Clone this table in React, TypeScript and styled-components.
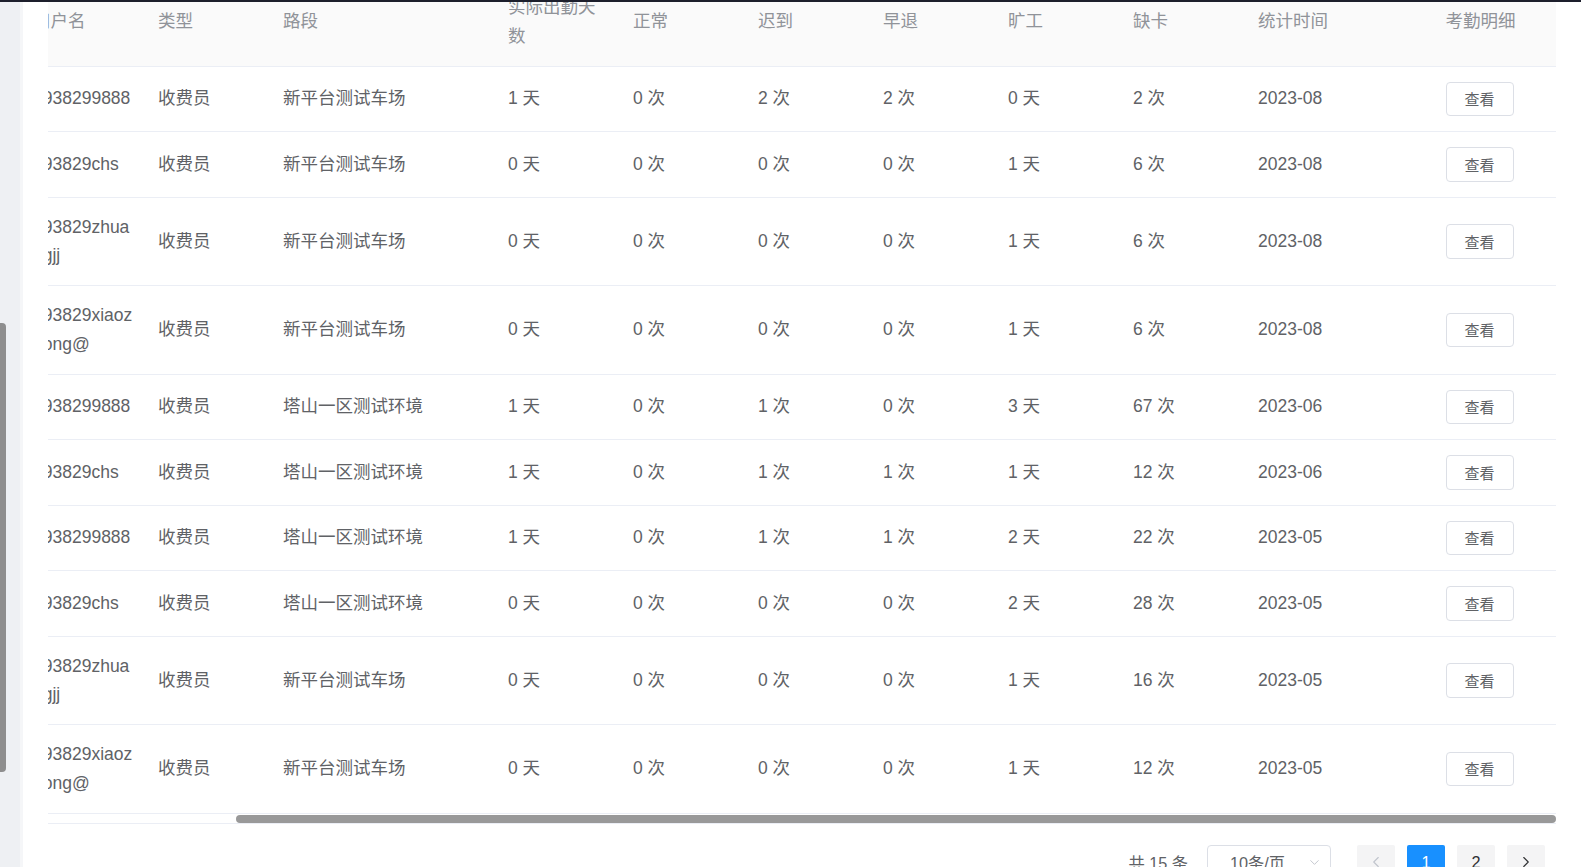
import { useLayoutEffect, useRef, useState } from 'react';
import styled, { createGlobalStyle } from 'styled-components';
import { ChevronDown, ChevronLeft, ChevronRight } from 'lucide-react';

const GlobalStyle = createGlobalStyle`
	html, body {
		margin: 0;
		padding: 0;
		height: 100%;
		overflow: hidden;
	}
	body {
		font-family: 'Liberation Sans', 'Noto Sans CJK SC', sans-serif;
		background: #fff;
	}
	#root {
		height: 100%;
	}
`;

const Page = styled.div`
	height: 100vh;
	display: flex;
	flex-direction: column;
`;

const TopBar = styled.div`
	height: 2px;
	flex-shrink: 0;
	background: #1d1f2c;
`;

const Body = styled.div`
	flex: 1;
	min-height: 0;
	display: flex;
`;

const Rail = styled.div`
	position: relative;
	width: 20px;
	flex-shrink: 0;
	background: #eef0f3;
	border-right: 3px solid #f5f6f8;
`;

const RailThumb = styled.div`
	position: absolute;
	left: 0;
	top: 321px;
	width: 6px;
	height: 449px;
	background: #8e8e8e;
	border-radius: 0 4px 4px 0;
`;

const Main = styled.div`
	flex: 1;
	min-width: 0;
	overflow-y: auto;
	padding: 0 25px 24px;
	background: #fff;
	scrollbar-width: none;
`;

const TableBox = styled.div`
	border-bottom: 1px solid #ebeef5;
`;

const Scroller = styled.div`
	overflow-x: auto;
	overflow-y: hidden;
	scrollbar-width: none;
`;

const ScrollTrack = styled.div`
	position: relative;
	height: 9px;
`;

const ScrollThumb = styled.div`
	position: absolute;
	top: 1px;
	height: 8px;
	border-radius: 4px;
	background: #999;
`;

const Table = styled.table`
	width: 1723px;
	table-layout: fixed;
	border-collapse: collapse;
	font-size: 17.5px;
	color: #606266;
`;

const Th = styled.th`
	background: #fafafa;
	color: #909399;
	font-weight: 400;
	text-align: left;
	vertical-align: middle;
	padding: 15px 0;
	border-bottom: 1px solid #ebeef5;
`;

const Td = styled.td`
	vertical-align: middle;
	padding: 15px 0;
	border-bottom: 1px solid #ebeef5;
`;

const Cell = styled.div<{ $center?: boolean }>`
	box-sizing: border-box;
	padding: 0 12.5px;
	line-height: 28.75px;
	word-break: break-all;
	${(p) => (p.$center ? 'display: flex; align-items: center;' : '')}
`;

const ViewButton = styled.button`
	height: 34.5px;
	padding: 0 18px;
	border: 1px solid #dcdfe6;
	border-radius: 4px;
	background: #fff;
	color: #606266;
	font-family: inherit;
	font-size: 15px;
	cursor: pointer;
`;

const Pager = styled.div`
	display: flex;
	justify-content: flex-end;
	align-items: center;
	margin-top: 21px;
	padding-right: 11px;
	font-size: 16.25px;
	color: #606266;
`;

const Total = styled.span`
	margin-right: 19px;
`;

const SizeSelect = styled.div`
	box-sizing: border-box;
	width: 124px;
	height: 35px;
	margin-right: 14px;
	padding: 0 8px 0 22px;
	display: flex;
	align-items: center;
	justify-content: space-between;
	border: 1px solid #dcdfe6;
	border-radius: 4px;
	color: #606266;
`;

const PageBtn = styled.div<{ $active?: boolean; $disabled?: boolean }>`
	width: 38px;
	height: 35px;
	margin-left: 12px;
	display: flex;
	align-items: center;
	justify-content: center;
	border-radius: 2px;
	background: ${(p) => (p.$active ? '#1890ff' : '#f4f4f5')};
	color: ${(p) => (p.$active ? '#fff' : p.$disabled ? '#c0c4cc' : '#303133')};
`;

type Row = {
	name: string;
	user: string;
	road: string;
	days: number;
	normal: number;
	late: number;
	early: number;
	absent: number;
	miss: number;
	month: string;
};

const columns: { title: string; width: number }[] = [
	{ title: '序号', width: 62.5 },
	{ title: '姓名', width: 125 },
	{ title: '用户名', width: 125 },
	{ title: '类型', width: 125 },
	{ title: '路段', width: 225 },
	{ title: '实际出勤天数', width: 125 },
	{ title: '正常', width: 125 },
	{ title: '迟到', width: 125 },
	{ title: '早退', width: 125 },
	{ title: '旷工', width: 125 },
	{ title: '缺卡', width: 125 },
	{ title: '统计时间', width: 187.5 },
	{ title: '考勤明细', width: 123 },
];

const A = '新平台测试车场';
const B = '塔山一区测试环境';

const rows: Row[] = [
	{ name: '测试一', user: '1938299888', road: A, days: 1, normal: 0, late: 2, early: 2, absent: 0, miss: 2, month: '2023-08' },
	{ name: '测试二', user: '193829chs', road: A, days: 0, normal: 0, late: 0, early: 0, absent: 1, miss: 6, month: '2023-08' },
	{ name: '测试三', user: '193829zhuangjj', road: A, days: 0, normal: 0, late: 0, early: 0, absent: 1, miss: 6, month: '2023-08' },
	{ name: '测试四', user: '193829xiaozhong@', road: A, days: 0, normal: 0, late: 0, early: 0, absent: 1, miss: 6, month: '2023-08' },
	{ name: '测试一', user: '1938299888', road: B, days: 1, normal: 0, late: 1, early: 0, absent: 3, miss: 67, month: '2023-06' },
	{ name: '测试二', user: '193829chs', road: B, days: 1, normal: 0, late: 1, early: 1, absent: 1, miss: 12, month: '2023-06' },
	{ name: '测试一', user: '1938299888', road: B, days: 1, normal: 0, late: 1, early: 1, absent: 2, miss: 22, month: '2023-05' },
	{ name: '测试二', user: '193829chs', road: B, days: 0, normal: 0, late: 0, early: 0, absent: 2, miss: 28, month: '2023-05' },
	{ name: '测试三', user: '193829zhuangjj', road: A, days: 0, normal: 0, late: 0, early: 0, absent: 1, miss: 16, month: '2023-05' },
	{ name: '测试四', user: '193829xiaozhong@', road: A, days: 0, normal: 0, late: 0, early: 0, absent: 1, miss: 12, month: '2023-05' },
];

export default function App() {
	const mainRef = useRef<HTMLDivElement>(null);
	const scrollRef = useRef<HTMLDivElement>(null);
	const [thumb, setThumb] = useState({ left: 0, width: 0 });

	const syncThumb = () => {
		const s = scrollRef.current;
		if (!s) return;
		const ratio = s.clientWidth / s.scrollWidth;
		setThumb({ left: s.scrollLeft * ratio, width: s.clientWidth * ratio });
	};

	useLayoutEffect(() => {
		if (mainRef.current) mainRef.current.scrollTop = 24;
		const s = scrollRef.current;
		if (s) s.scrollLeft = s.scrollWidth - s.clientWidth;
		syncThumb();
	}, []);

	return (
		<Page>
			<GlobalStyle />
			<TopBar />
			<Body>
				<Rail>
					<RailThumb />
				</Rail>
				<Main ref={mainRef}>
					<TableBox>
						<Scroller ref={scrollRef} onScroll={syncThumb}>
							<Table>
								<colgroup>
									{columns.map((c) => (
										<col key={c.title} style={{ width: c.width }} />
									))}
								</colgroup>
								<thead>
									<tr>
										{columns.map((c) => (
											<Th key={c.title}>
												<Cell>{c.title}</Cell>
											</Th>
										))}
									</tr>
								</thead>
								<tbody>
									{rows.map((r, i) => (
										<tr key={i}>
											<Td><Cell>{i + 1}</Cell></Td>
											<Td><Cell>{r.name}</Cell></Td>
											<Td><Cell>{r.user}</Cell></Td>
											<Td><Cell>收费员</Cell></Td>
											<Td><Cell>{r.road}</Cell></Td>
											<Td><Cell>{r.days} 天</Cell></Td>
											<Td><Cell>{r.normal} 次</Cell></Td>
											<Td><Cell>{r.late} 次</Cell></Td>
											<Td><Cell>{r.early} 次</Cell></Td>
											<Td><Cell>{r.absent} 天</Cell></Td>
											<Td><Cell>{r.miss} 次</Cell></Td>
											<Td><Cell>{r.month}</Cell></Td>
											<Td>
												<Cell $center>
													<ViewButton>查看</ViewButton>
												</Cell>
											</Td>
										</tr>
									))}
								</tbody>
							</Table>
						</Scroller>
						<ScrollTrack>
							<ScrollThumb style={{ left: thumb.left, width: thumb.width }} />
						</ScrollTrack>
					</TableBox>
					<Pager>
						<Total>共 15 条</Total>
						<SizeSelect>
							<span>10条/页</span>
							<ChevronDown size={15} color='#c0c4cc' strokeWidth={1.5} />
						</SizeSelect>
						<PageBtn $disabled>
							<ChevronLeft size={18} strokeWidth={1.5} />
						</PageBtn>
						<PageBtn $active>1</PageBtn>
						<PageBtn>2</PageBtn>
						<PageBtn>
							<ChevronRight size={18} strokeWidth={1.5} />
						</PageBtn>
					</Pager>
				</Main>
			</Body>
		</Page>
	);
}
